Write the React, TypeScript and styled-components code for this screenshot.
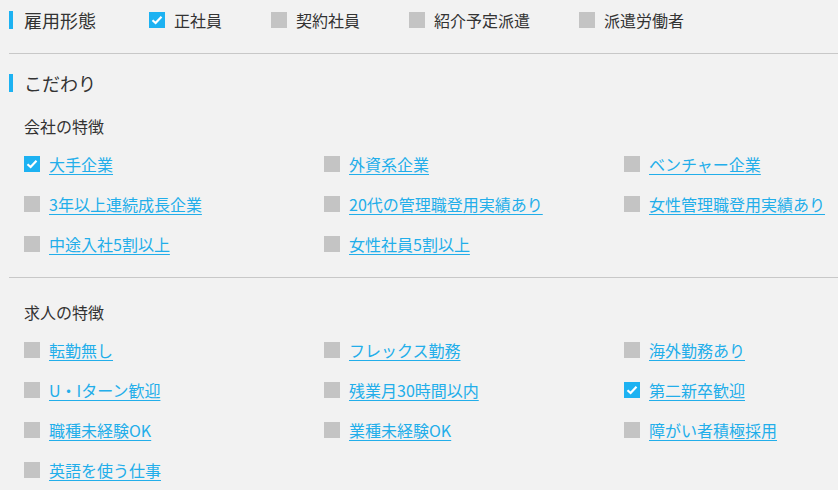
import React from "react";
import styled, { createGlobalStyle } from "styled-components";

const GlobalStyle = createGlobalStyle`
  html, body {
    margin: 0;
    padding: 0;
    background: #f2f2f2;
  }
  body {
    font-family: "Noto Sans CJK JP", "Noto Sans", sans-serif;
    color: #333333;
  }
`;

const BLUE = "#1db2f2";

const Page = styled.div`
  width: 838px;
  height: 490px;
  overflow: hidden;
  padding-left: 9px;
  box-sizing: border-box;
  background: #f2f2f2;
`;

const EmploymentRow = styled.div`
  display: flex;
  align-items: center;
  height: 39px;
`;

const SectionTitle = styled.div<{ $trail?: number }>`
  display: flex;
  align-items: center;
  height: 18px;
  font-size: 18px;
  line-height: 18px;
  color: #333;
  margin-right: ${(p) => p.$trail ?? 0}px;

  &::before {
    content: "";
    display: block;
    width: 4px;
    height: 18px;
    background: ${BLUE};
    margin-right: 11px;
  }
`;

const InlineOptions = styled.div`
  display: flex;
  align-items: center;
  gap: 49px;
`;

const Option = styled.label`
  display: flex;
  align-items: center;
  gap: 9px;
  font-size: 16px;
  line-height: 20px;
  white-space: nowrap;
  cursor: pointer;
`;

const Box = styled.span<{ $checked?: boolean }>`
  display: flex;
  align-items: center;
  justify-content: center;
  width: 16px;
  height: 16px;
  flex: none;
  background: ${(p) => (p.$checked ? BLUE : "#c4c4c4")};
`;

const Divider = styled.hr<{ $top: number }>`
  border: none;
  height: 1px;
  background: #c8c8c8;
  margin: ${(p) => p.$top}px 0 0 0;
`;

const Section = styled.section`
  padding-top: 20px;
`;

const Group = styled.div`
  padding-top: 24px;
`;

const SubTitle = styled.div`
  font-size: 16px;
  line-height: 20px;
  padding-left: 15px;
  color: #333;
`;

const Grid = styled.div`
  display: grid;
  grid-template-columns: 300px 300px 300px;
  grid-auto-rows: 40px;
  padding-left: 15px;
  margin-top: 8px;
`;

const LinkText = styled.a`
  color: #22aeea;
  text-decoration: underline;
  text-underline-offset: 3px;
  text-decoration-thickness: 1px;
`;

const Check = () => (
  <svg width="12" height="10" viewBox="0 0 12 10">
    <path d="M1.5 5.2 L4.6 8 L10.5 1.8" fill="none" stroke="#fff" strokeWidth="2.2" />
  </svg>
);

const Checkbox: React.FC<{ checked?: boolean }> = ({ checked }) => (
  <Box $checked={checked}>{checked && <Check />}</Box>
);

type Item = { label: string; checked?: boolean };

const employment: Item[] = [
  { label: "正社員", checked: true },
  { label: "契約社員" },
  { label: "紹介予定派遣" },
  { label: "派遣労働者" },
];

const company: Item[] = [
  { label: "大手企業", checked: true },
  { label: "外資系企業" },
  { label: "ベンチャー企業" },
  { label: "3年以上連続成長企業" },
  { label: "20代の管理職登用実績あり" },
  { label: "女性管理職登用実績あり" },
  { label: "中途入社5割以上" },
  { label: "女性社員5割以上" },
];

const job: Item[] = [
  { label: "転勤無し" },
  { label: "フレックス勤務" },
  { label: "海外勤務あり" },
  { label: "U・Iターン歓迎" },
  { label: "残業月30時間以内" },
  { label: "第二新卒歓迎", checked: true },
  { label: "職種未経験OK" },
  { label: "業種未経験OK" },
  { label: "障がい者積極採用" },
  { label: "英語を使う仕事" },
];

const OptionGrid: React.FC<{ items: Item[] }> = ({ items }) => (
  <Grid>
    {items.map((it) => (
      <Option key={it.label}>
        <Checkbox checked={it.checked} />
        <LinkText>{it.label}</LinkText>
      </Option>
    ))}
  </Grid>
);

export default function App() {
  return (
    <Page>
      <GlobalStyle />
      <EmploymentRow>
        <SectionTitle $trail={53}>雇用形態</SectionTitle>
        <InlineOptions>
          {employment.map((it) => (
            <Option key={it.label}>
              <Checkbox checked={it.checked} />
              <span>{it.label}</span>
            </Option>
          ))}
        </InlineOptions>
      </EmploymentRow>
      <Divider $top={14} />
      <Section>
        <SectionTitle>こだわり</SectionTitle>
        <Group>
          <SubTitle>会社の特徴</SubTitle>
          <OptionGrid items={company} />
        </Group>
        <Divider $top={13} />
        <Group>
          <SubTitle>求人の特徴</SubTitle>
          <OptionGrid items={job} />
        </Group>
      </Section>
    </Page>
  );
}
